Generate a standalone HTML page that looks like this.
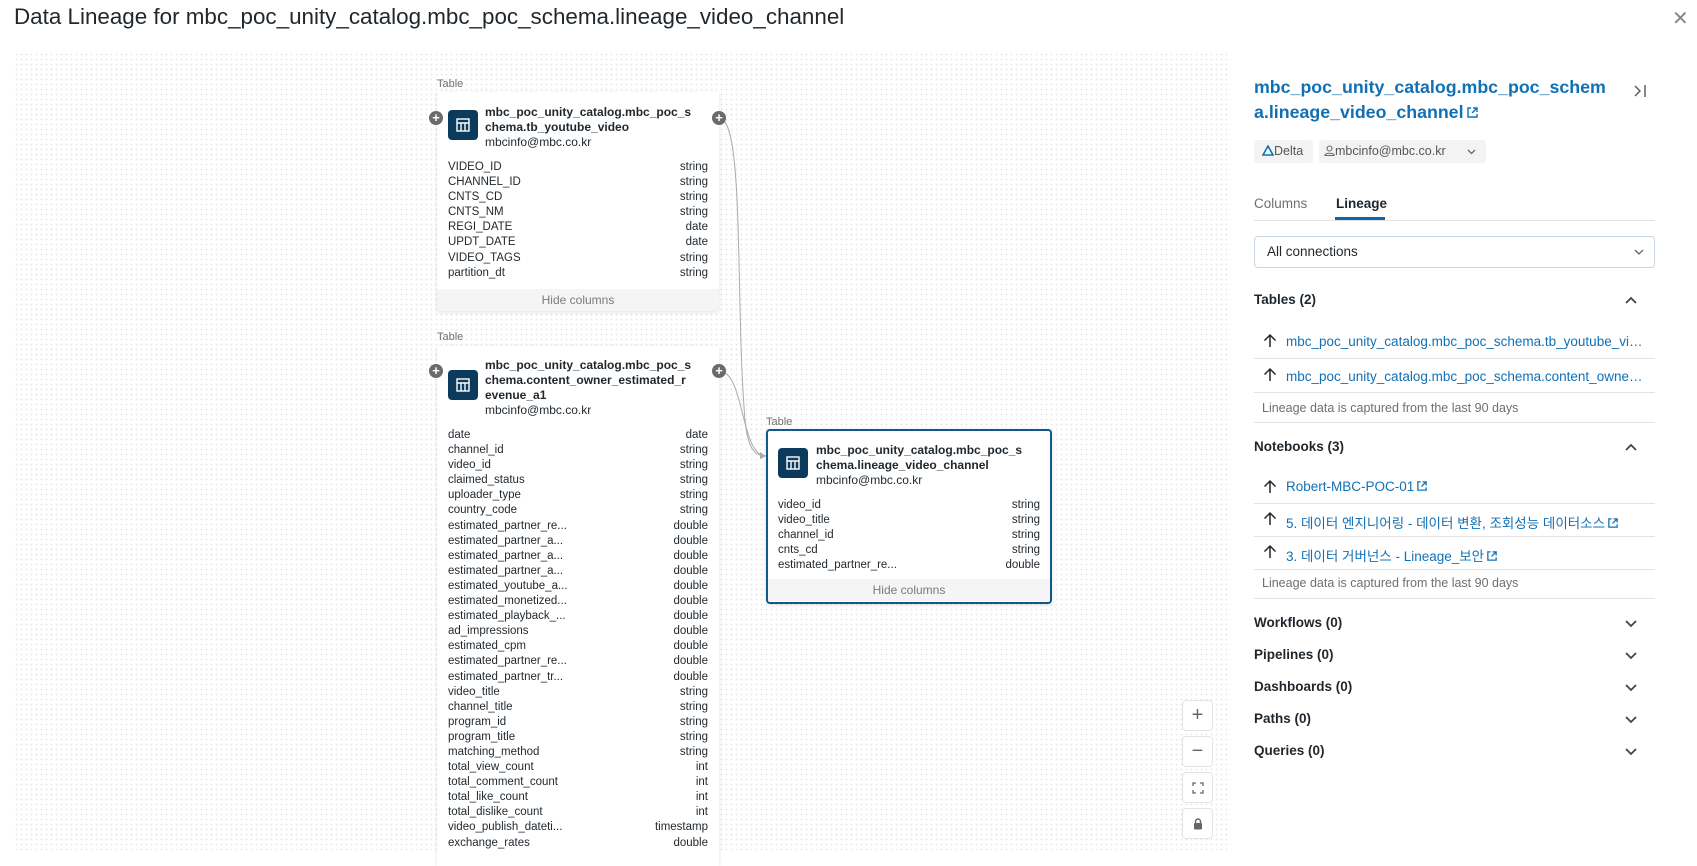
<!DOCTYPE html>
<html><head><meta charset="utf-8"><style>
*{box-sizing:border-box;margin:0;padding:0}
body{width:1697px;height:850px;overflow:hidden;background:#fff;font-family:"Liberation Sans","Noto Sans CJK KR",sans-serif;color:#1f272d;position:relative}
.abs{position:absolute}
h1{position:absolute;left:14px;top:4px;font-size:22.4px;font-weight:400;color:#1f272d;white-space:nowrap}
.canvas{position:absolute;left:14px;top:52px;width:1217px;height:798px;background-image:radial-gradient(circle,#e3e3e3 0.7px,transparent 0.9px);background-size:5px 5px}
.lbl{position:absolute;font-size:11px;color:#6f6f6f}
.card{position:absolute;background:#fff;box-shadow:0 1px 4px rgba(0,0,0,.12)}
.icon{position:absolute;width:30px;height:30px;background:#0b3a5c;border-radius:4px}
.icon svg{position:absolute;left:8px;top:8px}
.tt{position:absolute;font-size:12px;font-weight:700;line-height:15px;color:#1f272d}
.em{font-weight:400}
.cols{position:absolute;font-size:11.5px;line-height:15.1px;color:#1f272d}
.cols div{display:flex;justify-content:space-between;white-space:nowrap}
.hide{position:absolute;left:0;right:0;bottom:0;height:22px;background:#f5f5f5;color:#7a7a7a;font-size:12px;text-align:center;line-height:22px}
.plus{position:absolute;width:14px;height:14px;border-radius:50%;background:#6b6b6b;color:#fff;font-size:13px;line-height:13px;text-align:center;font-weight:700}
.ctl{position:absolute;left:1182px;width:31px;height:31px;border:1px solid #e4e4e4;border-radius:4px;background:#fff;color:#666;text-align:center;font-size:20px;line-height:28px}
.rp{position:absolute;left:1254px;width:401px}
.sec{position:absolute;left:1254px;width:380px;font-size:13.5px;font-weight:700;color:#1f272d}
.chev{position:absolute;left:1624px;width:14px;height:14px}
.row{position:absolute;left:1254px;width:401px;border-bottom:1px solid #e3e3e3;font-size:13.5px;color:#1170b5;white-space:nowrap}
.row > svg{position:absolute;left:9px}
.note{position:absolute;left:1262px;font-size:12.5px;color:#6f6f6f}
.sep{position:absolute;left:1254px;width:401px;height:1px;background:#e3e3e3}
.ext{display:inline-block;vertical-align:-1px;margin-left:2px}
</style></head><body>
<h1>Data Lineage for mbc_poc_unity_catalog.mbc_poc_schema.lineage_video_channel</h1>
<div class="abs" style="left:1672px;top:6px;font-size:20px;color:#888">✕</div>
<div class="canvas"></div>

<svg class="abs" style="left:0;top:0" width="1240" height="850">
<path d="M719 118 C 745 118, 735 300, 745 420 C 748 450, 755 456, 766 456" fill="none" stroke="#aaa" stroke-width="1"/>
<path d="M719 371 C 745 371, 740 456, 766 456" fill="none" stroke="#aaa" stroke-width="1"/>
<path d="M760 452 L766 456 L760 459 Z" fill="#aaa"/>
</svg>

<!-- card1 -->
<div class="lbl" style="left:437px;top:78px">Table</div>
<div class="card" style="left:437px;top:92px;width:282px;height:219px"><div class="hide">Hide columns</div></div>
<div class="icon" style="left:448px;top:110px"><svg width="14" height="14" viewBox="0 0 14 14"><rect x="1" y="1" width="12" height="12" fill="none" stroke="#fff" stroke-width="1.4"/><path d="M1 5H13M5 5V13M9 5V13" stroke="#fff" stroke-width="1.4"/></svg></div>
<div class="tt" style="left:485px;top:105px">mbc_poc_unity_catalog.mbc_poc_s<br>chema.tb_youtube_video<br><span class="em">mbcinfo@mbc.co.kr</span></div>
<div class="cols" style="left:448px;top:160px;width:260px">
<div><span>VIDEO_ID</span><span>string</span></div><div><span>CHANNEL_ID</span><span>string</span></div><div><span>CNTS_CD</span><span>string</span></div><div><span>CNTS_NM</span><span>string</span></div><div><span>REGI_DATE</span><span>date</span></div><div><span>UPDT_DATE</span><span>date</span></div><div><span>VIDEO_TAGS</span><span>string</span></div><div><span>partition_dt</span><span>string</span></div></div>
<div class="plus" style="left:429px;top:111px">+</div><div class="plus" style="left:712px;top:111px">+</div>

<!-- card2 -->
<div class="lbl" style="left:437px;top:331px">Table</div>
<div class="card" style="left:437px;top:346px;width:282px;height:520px"></div>
<div class="icon" style="left:448px;top:370px"><svg width="14" height="14" viewBox="0 0 14 14"><rect x="1" y="1" width="12" height="12" fill="none" stroke="#fff" stroke-width="1.4"/><path d="M1 5H13M5 5V13M9 5V13" stroke="#fff" stroke-width="1.4"/></svg></div>
<div class="tt" style="left:485px;top:358px">mbc_poc_unity_catalog.mbc_poc_s<br>chema.content_owner_estimated_r<br>evenue_a1<br><span class="em">mbcinfo@mbc.co.kr</span></div>
<div class="cols" style="left:448px;top:428px;width:260px">
<div><span>date</span><span>date</span></div><div><span>channel_id</span><span>string</span></div><div><span>video_id</span><span>string</span></div><div><span>claimed_status</span><span>string</span></div><div><span>uploader_type</span><span>string</span></div><div><span>country_code</span><span>string</span></div><div><span>estimated_partner_re...</span><span>double</span></div><div><span>estimated_partner_a...</span><span>double</span></div><div><span>estimated_partner_a...</span><span>double</span></div><div><span>estimated_partner_a...</span><span>double</span></div><div><span>estimated_youtube_a...</span><span>double</span></div><div><span>estimated_monetized...</span><span>double</span></div><div><span>estimated_playback_...</span><span>double</span></div><div><span>ad_impressions</span><span>double</span></div><div><span>estimated_cpm</span><span>double</span></div><div><span>estimated_partner_re...</span><span>double</span></div><div><span>estimated_partner_tr...</span><span>double</span></div><div><span>video_title</span><span>string</span></div><div><span>channel_title</span><span>string</span></div><div><span>program_id</span><span>string</span></div><div><span>program_title</span><span>string</span></div><div><span>matching_method</span><span>string</span></div><div><span>total_view_count</span><span>int</span></div><div><span>total_comment_count</span><span>int</span></div><div><span>total_like_count</span><span>int</span></div><div><span>total_dislike_count</span><span>int</span></div><div><span>video_publish_dateti...</span><span>timestamp</span></div><div><span>exchange_rates</span><span>double</span></div></div>
<div class="plus" style="left:429px;top:364px">+</div><div class="plus" style="left:712px;top:364px">+</div>

<!-- card3 -->
<div class="lbl" style="left:766px;top:416px">Table</div>
<div class="card" style="left:766px;top:429px;width:286px;height:175px;border:2px solid #0e5a8a;border-radius:4px;overflow:hidden"><div class="hide" style="bottom:1px">Hide columns</div></div>
<div class="icon" style="left:778px;top:448px"><svg width="14" height="14" viewBox="0 0 14 14"><rect x="1" y="1" width="12" height="12" fill="none" stroke="#fff" stroke-width="1.4"/><path d="M1 5H13M5 5V13M9 5V13" stroke="#fff" stroke-width="1.4"/></svg></div>
<div class="tt" style="left:816px;top:443px">mbc_poc_unity_catalog.mbc_poc_s<br>chema.lineage_video_channel<br><span class="em">mbcinfo@mbc.co.kr</span></div>
<div class="cols" style="left:778px;top:498px;width:262px">
<div><span>video_id</span><span>string</span></div><div><span>video_title</span><span>string</span></div><div><span>channel_id</span><span>string</span></div><div><span>cnts_cd</span><span>string</span></div><div><span>estimated_partner_re...</span><span>double</span></div></div>

<div class="ctl" style="top:700px">+</div>
<div class="ctl" style="top:736px">−</div>
<div class="ctl" style="top:772px"><svg width="12" height="12" viewBox="0 0 12 12" style="margin-top:9px"><path d="M1 4V1H4M8 1H11V4M11 8V11H8M4 11H1V8" fill="none" stroke="#666" stroke-width="1.3"/></svg></div>
<div class="ctl" style="top:808px"><svg width="10" height="12" viewBox="0 0 10 12" style="margin-top:9px"><path d="M2.5 5V3.5a2.5 2.5 0 0 1 5 0V5" fill="none" stroke="#666" stroke-width="1.4"/><rect x="1" y="5" width="8" height="6.5" rx="1" fill="#666"/></svg></div>

<!-- right panel -->
<div class="rp" style="top:75px;font-size:17.8px;line-height:25px;color:#1170b5;font-weight:600;width:360px">mbc_poc_unity_catalog.mbc_poc_schem a.lineage_video_channel<svg class="ext" width="13" height="13" viewBox="0 0 13 13"><path d="M5 2H2V11H11V8M7 2H11V6M11 2L6 7" fill="none" stroke="#1170b5" stroke-width="1.4"/></svg></div>
<svg class="abs" style="left:1632px;top:83px" width="16" height="16" viewBox="0 0 16 16"><path d="M3 3L8 8L3 13M13 2V14" fill="none" stroke="#555" stroke-width="1.4"/></svg>
<div class="abs" style="left:1254px;top:140px;width:59px;height:23px;background:#f3f3f3;border-radius:3px;font-size:12.5px;color:#555;line-height:23px;padding-left:8px"><svg width="12" height="11" viewBox="0 0 12 11" style="vertical-align:-1px"><path d="M6 1L11 10H1Z" fill="none" stroke="#1170b5" stroke-width="1.6"/></svg>Delta</div>
<div class="abs" style="left:1319px;top:140px;width:167px;height:23px;background:#f3f3f3;border-radius:3px;font-size:12.5px;color:#555;line-height:23px;padding-left:5px"><svg width="11" height="11" viewBox="0 0 11 11" style="vertical-align:-1px"><circle cx="5.5" cy="3.5" r="2.5" fill="none" stroke="#666" stroke-width="1.1"/><path d="M1 10.5C1 7.5 10 7.5 10 10.5Z" fill="none" stroke="#666" stroke-width="1.1"/></svg>mbcinfo@mbc.co.kr<svg style="position:absolute;left:148px;top:9px" width="9" height="6"><path d="M1 1L4.5 4.5L8 1" fill="none" stroke="#666" stroke-width="1.3"/></svg></div>
<div class="abs" style="left:1254px;top:196px;font-size:13.5px;color:#6f6f6f">Columns</div>
<div class="abs" style="left:1336px;top:196px;font-size:13.5px;color:#1f272d;font-weight:600">Lineage</div>
<div class="abs" style="left:1335px;top:217px;width:50px;height:3px;background:#0e64a8"></div>
<div class="sep" style="top:220px"></div>
<div class="abs" style="left:1254px;top:236px;width:401px;height:32px;border:1px solid #c9d6e2;border-radius:4px;font-size:13.5px;line-height:30px;padding-left:12px">All connections<svg style="position:absolute;right:10px;top:12px" width="10" height="6"><path d="M1 1L5 5L9 1" fill="none" stroke="#666" stroke-width="1.3"/></svg></div>

<div class="sec" style="top:292px">Tables (2)</div>
<svg class="chev" style="top:293px"><path d="M2 10L7 5L12 10" fill="none" stroke="#444" stroke-width="1.8"/></svg>
<div class="row" style="top:332px;height:27px"><svg style="top:1px" width="14" height="15" viewBox="0 0 14 15"><path d="M7 14V2M1.5 7.5L7 2L12.5 7.5" fill="none" stroke="#1f272d" stroke-width="1.5"/></svg><span style="position:absolute;left:32px;top:2px">mbc_poc_unity_catalog.mbc_poc_schema.tb_youtube_vi…</span></div>
<div class="row" style="top:359px;height:34px"><svg style="top:8px" width="14" height="15" viewBox="0 0 14 15"><path d="M7 14V2M1.5 7.5L7 2L12.5 7.5" fill="none" stroke="#1f272d" stroke-width="1.5"/></svg><span style="position:absolute;left:32px;top:10px">mbc_poc_unity_catalog.mbc_poc_schema.content_owne…</span></div>
<div class="note" style="top:401px">Lineage data is captured from the last 90 days</div>
<div class="sep" style="top:422px"></div>
<div class="sec" style="top:439px">Notebooks (3)</div>
<svg class="chev" style="top:440px"><path d="M2 10L7 5L12 10" fill="none" stroke="#444" stroke-width="1.8"/></svg>
<div class="row" style="top:476px;height:28px"><svg style="top:3px" width="14" height="15" viewBox="0 0 14 15"><path d="M7 14V2M1.5 7.5L7 2L12.5 7.5" fill="none" stroke="#1f272d" stroke-width="1.5"/></svg><span style="position:absolute;left:32px;top:3px">Robert-MBC-POC-01<svg class="ext" width="12" height="12" viewBox="0 0 13 13"><path d="M5 2H2V11H11V8M7 2H11V6M11 2L6 7" fill="none" stroke="#1170b5" stroke-width="1.4"/></svg></span></div>
<div class="row" style="top:504px;height:33px"><svg style="top:7px" width="14" height="15" viewBox="0 0 14 15"><path d="M7 14V2M1.5 7.5L7 2L12.5 7.5" fill="none" stroke="#1f272d" stroke-width="1.5"/></svg><span style="position:absolute;left:32px;top:8px">5. 데이터 엔지니어링 - 데이터 변환, 조회성능 데이터소스<svg class="ext" width="12" height="12" viewBox="0 0 13 13"><path d="M5 2H2V11H11V8M7 2H11V6M11 2L6 7" fill="none" stroke="#1170b5" stroke-width="1.4"/></svg></span></div>
<div class="row" style="top:537px;height:33px"><svg style="top:7px" width="14" height="15" viewBox="0 0 14 15"><path d="M7 14V2M1.5 7.5L7 2L12.5 7.5" fill="none" stroke="#1f272d" stroke-width="1.5"/></svg><span style="position:absolute;left:32px;top:8px">3. 데이터 거버넌스 - Lineage_보안<svg class="ext" width="12" height="12" viewBox="0 0 13 13"><path d="M5 2H2V11H11V8M7 2H11V6M11 2L6 7" fill="none" stroke="#1170b5" stroke-width="1.4"/></svg></span></div>
<div class="note" style="top:576px">Lineage data is captured from the last 90 days</div>
<div class="sep" style="top:598px"></div>
<div class="sec" style="top:615px">Workflows (0)</div>
<div class="sec" style="top:647px">Pipelines (0)</div>
<div class="sec" style="top:679px">Dashboards (0)</div>
<div class="sec" style="top:711px">Paths (0)</div>
<div class="sec" style="top:743px">Queries (0)</div>
<svg class="chev" style="top:617px"><path d="M2 4L7 9L12 4" fill="none" stroke="#444" stroke-width="1.8"/></svg>
<svg class="chev" style="top:649px"><path d="M2 4L7 9L12 4" fill="none" stroke="#444" stroke-width="1.8"/></svg>
<svg class="chev" style="top:681px"><path d="M2 4L7 9L12 4" fill="none" stroke="#444" stroke-width="1.8"/></svg>
<svg class="chev" style="top:713px"><path d="M2 4L7 9L12 4" fill="none" stroke="#444" stroke-width="1.8"/></svg>
<svg class="chev" style="top:745px"><path d="M2 4L7 9L12 4" fill="none" stroke="#444" stroke-width="1.8"/></svg>
</body></html>
